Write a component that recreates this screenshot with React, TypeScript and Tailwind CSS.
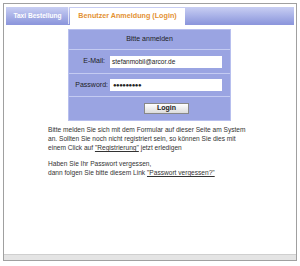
export default function App() {
  const font = { fontFamily: '"Liberation Sans", Arial, sans-serif' };
  return (
    <div className="w-[300px] h-[266px] bg-white p-[3px] pb-[5px]" style={font}>
      <div className="h-full flex flex-col border border-[#a0a0a0] bg-white">
        <div className="flex-1 flex flex-col px-[2px] pt-[3px]">
          {/* tab strip */}
          <div className="h-[18px] flex items-end bg-gradient-to-b from-[#c9cff3] to-[#8d97dc] border-b border-[#8d97dc]">
            <div className="h-[17px] w-[62px] ml-[1px] flex items-center justify-center text-[6.6px] font-bold text-white border-r border-white/70">
              Taxi Bestellung
            </div>
            <div className="h-[17px] w-[115px] ml-[1px] flex items-center justify-center text-[7.2px] font-bold text-[#e39133] bg-white -mb-px">
              Benutzer Anmeldung (Login)
            </div>
          </div>
          {/* login box */}
          <div className="mt-[4px] ml-[62px] w-[163px] bg-[#9aa4e2] text-[#222] text-[7px] border border-[#b7bfee]">
            <div className="h-[20px] flex items-center justify-center border-b border-[#c4cbf2]">Bitte anmelden</div>
            <div className="h-[24px] flex items-center border-b border-[#c4cbf2]">
              <div className="w-[41px] text-right pr-[5px]">E-Mail:</div>
              <div className="w-[112px] h-[12px] bg-white flex items-center pl-[2px] text-[6.5px]">stefanmobil@arcor.de</div>
            </div>
            <div className="h-[23px] flex items-center border-b border-[#c4cbf2]">
              <div className="w-[41px] text-right pr-[2px]">Password:</div>
              <div className="w-[112px] h-[12px] bg-white flex items-center pl-[3px] text-[6px] tracking-[-0.5px]">●●●●●●●●●</div>
            </div>
            <div className="h-[23px] flex items-center pl-[75px]">
              <div className="w-[45px] h-[11px] flex items-center justify-center bg-gradient-to-b from-white to-[#dcdcdc] border border-[#888] text-[7px] font-bold">Login</div>
            </div>
          </div>
          {/* text */}
          <div className="mt-[4px] ml-[42px] w-[206px] text-[6.6px] leading-[9px] text-[#333]">
            <p>Bitte melden Sie sich mit dem Formular auf dieser Seite am System an. Sollten Sie noch nicht registriert sein, so können Sie dies mit einem Click auf <span className="underline">"Registrierung"</span> jetzt erledigen</p>
            <p className="mt-[7px]">Haben Sie Ihr Passwort vergessen,<br />dann folgen Sie bitte diesem Link <span className="underline">"Passwort vergessen?"</span></p>
          </div>
        </div>
        <div className="h-[6px] bg-[#e4e4e4] border-t border-[#cfcfcf]"></div>
      </div>
    </div>
  );
}
